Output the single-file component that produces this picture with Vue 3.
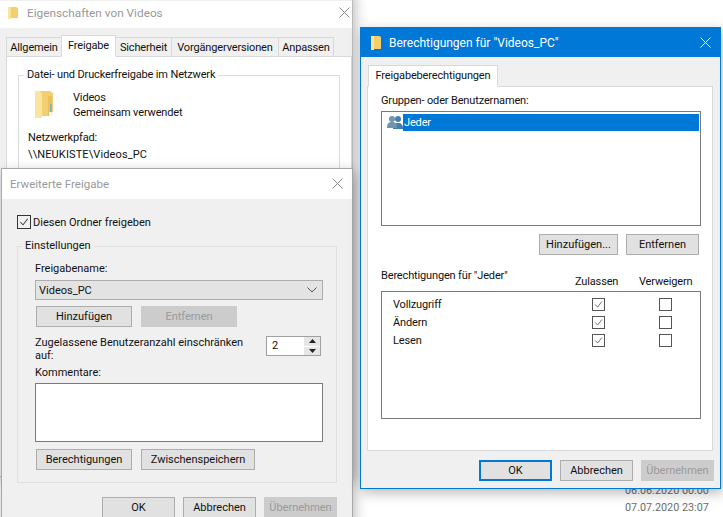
<script setup>
const perms = ['Vollzugriff', 'Ändern', 'Lesen']
const tabs = [
  { label: 'Allgemein', w: 56 },
  { label: 'Freigabe', w: 55, on: true },
  { label: 'Sicherheit', w: 57 },
  { label: 'Vorgängerversionen', w: 108 },
  { label: 'Anpassen', w: 56 }
]
</script>

<template>
  <div class="desk">
    <div class="stamp cut">06.06.2020 00:00</div>
    <div class="stamp">07.07.2020 23:07</div>

    <section class="win one">
      <header class="bar">
        <svg class="tiny" viewBox="0 0 10 12"><path d="M0 0h8l2 1v10H3l-3 1z" fill="#f4cf6c"/><path d="M0 0h3v12H0z" fill="#fbe59b"/></svg>
        <span class="title">Eigenschaften von Videos</span>
        <svg class="x" viewBox="0 0 11 11"><path d="M.5.5l10 10M10.5.5l-10 10" stroke="#8a8a8a" fill="none"/></svg>
      </header>
      <div class="body1">
        <div class="tabs1">
          <span v-for="t in tabs" :key="t.label" class="tab" :class="{ on: t.on }" :style="{ width: t.w + 'px' }">{{ t.label }}</span>
        </div>
        <div class="panel1">
          <fieldset class="grp1">
            <legend>Datei- und Druckerfreigabe im Netzwerk</legend>
            <div class="share">
              <svg class="folder" viewBox="0 0 22 28">
                <path d="M1 1h15l3 2v23H5l-4 2z" fill="#f2cf73"/>
                <path d="M1 1h5l2 3v24H1z" fill="#fae4a0"/>
                <path d="M14 6h4v20h-4z" fill="#e9c15a"/>
                <path d="M16 14h2v8h-2z" fill="#8fb3c4"/>
                <path d="M15 22h4v4h-4z" fill="#f4f4f0"/>
              </svg>
              <div class="sharetext"><div>Videos</div><div>Gemeinsam verwendet</div></div>
            </div>
            <div class="pathlabel">Netzwerkpfad:</div>
            <div class="pathvalue">\\NEUKISTE\Videos_PC</div>
          </fieldset>
        </div>
      </div>
    </section>

    <section class="win two">
      <header class="bar bar2">
        <span class="title t2">Erweiterte Freigabe</span>
        <svg class="x" viewBox="0 0 11 11"><path d="M.5.5l10 10M10.5.5l-10 10" stroke="#8a8a8a" fill="none"/></svg>
      </header>
      <div class="body2">
        <label class="share-check">
          <span class="check big"><svg viewBox="0 0 13 13"><path d="M2.5 6.5l3 3 5-6.5" stroke="#444" stroke-width="1.1" fill="none"/></svg></span>
          <span>Diesen Ordner freigeben</span>
        </label>
        <fieldset class="grp2">
          <legend>Einstellungen</legend>
          <div class="lab">Freigabename:</div>
          <div class="select">
            <span>Videos_PC</span>
            <svg viewBox="0 0 10 6"><path d="M.5.5L5 5 9.5.5" stroke="#555" fill="none"/></svg>
          </div>
          <div class="row r1">
            <button class="btn w96">Hinzufügen</button>
            <button class="btn w96 off">Entfernen</button>
          </div>
          <div class="limit">
            <div class="limittext">Zugelassene Benutzeranzahl einschränken auf:</div>
            <div class="spin">
              <span class="val">2</span>
              <span class="arrows">
                <i><svg viewBox="0 0 7 4"><path d="M3.5 0L7 4H0z" fill="#222"/></svg></i>
                <i><svg viewBox="0 0 7 4"><path d="M3.5 4L7 0H0z" fill="#222"/></svg></i>
              </span>
            </div>
          </div>
          <div class="lab lab2">Kommentare:</div>
          <div class="area"></div>
          <div class="row r2">
            <button class="btn w96">Berechtigungen</button>
            <button class="btn w114">Zwischenspeichern</button>
          </div>
        </fieldset>
        <div class="foot foot2">
          <button class="btn w73">OK</button>
          <button class="btn w73">Abbrechen</button>
          <button class="btn w73 off">Übernehmen</button>
        </div>
      </div>
    </section>

    <section class="win three">
      <header class="bar blue">
        <svg class="tiny t3" viewBox="0 0 10 14"><path d="M0 0h8l2 1v12H3l-3 1z" fill="#f4cf6c"/><path d="M0 0h3v14H0z" fill="#fbe59b"/></svg>
        <span class="title w">Berechtigungen für "Videos_PC"</span>
        <svg class="x xw" viewBox="0 0 11 11"><path d="M.5.5l10 10M10.5.5l-10 10" stroke="#fff" fill="none"/></svg>
      </header>
      <div class="body3">
        <div class="tabs3"><span class="tab on only">Freigabeberechtigungen</span></div>
        <div class="panel3">
          <div class="lab3">Gruppen- oder Benutzernamen:</div>
          <div class="list">
            <div class="item">
              <svg class="users" viewBox="0 0 16 14">
                <circle cx="11" cy="4" r="3" fill="#3f7fb5"/><path d="M6 14c0-5 2-6 5-6s5 1 5 6z" fill="#3f7fb5"/>
                <circle cx="5" cy="4" r="3" fill="#6f94ad"/><path d="M0 13c0-5 2-6 5-6s5 1 5 6z" fill="#6f94ad"/>
              </svg>
              <span class="sel">Jeder</span>
            </div>
          </div>
          <div class="row r3">
            <button class="btn w79">Hinzufügen...</button>
            <button class="btn w73">Entfernen</button>
          </div>
          <div class="permhead">
            <span class="ph1">Berechtigungen für "Jeder"</span>
            <span class="ph2">Zulassen</span>
            <span class="ph3">Verweigern</span>
          </div>
          <div class="permbox">
            <div v-for="p in perms" :key="p" class="perm">
              <span class="pn">{{ p }}</span>
              <span class="cell"><span class="check"><svg viewBox="0 0 13 13"><path d="M2.5 6.5l3 3 5-6.5" stroke="#555" fill="none"/></svg></span></span>
              <span class="cell"><span class="check"></span></span>
            </div>
          </div>
        </div>
        <div class="foot foot3">
          <button class="btn w73 def">OK</button>
          <button class="btn w73">Abbrechen</button>
          <button class="btn w73 off">Übernehmen</button>
        </div>
      </div>
    </section>
  </div>
</template>

<style>
html, body { margin: 0; background: #fff; }
</style>

<style scoped>
.desk { position: relative; width: 723px; height: 517px; overflow: hidden; background: #fff; font: 11px Roboto, sans-serif; color: #111; }
.stamp { position: absolute; left: 625px; top: 501px; color: #6d6d6d; font-size: 10.8px; }
.cut { top: 484px; }
.win { position: absolute; box-sizing: border-box; background: #f0f0f0; box-shadow: 2px 4px 12px rgba(0,0,0,.28); }
.one { left: -1px; top: -10px; width: 354px; height: 487px; border: 1px solid #bbb; letter-spacing: -.15px; }
.two { left: 1px; top: 168px; width: 352px; height: 360px; border: 1px solid #a8a8a8; }
.three { left: 360px; top: 27px; width: 361px; height: 462px; border: 1px solid #0078d7; letter-spacing: -.15px; }
.bar { box-sizing: border-box; height: 27px; background: #fff; display: flex; align-items: center; margin-top: 10px; padding: 0 0 4px 8px; }
.bar2 { height: 30px; margin-top: 0; padding: 0 0 1px 8px; }
.blue { background: #0078d7; height: 29px; margin-top: 0; padding: 0 0 0 10px; }
.tiny { width: 10px; height: 12px; margin-right: 9px; }
.t3 { height: 14px; margin-right: 8px; }
.title { font-size: 11.8px; letter-spacing: 0; color: #999; flex: 1; }
.t2 { font-size: 11.5px; }
.title.w { font-size: 12px; color: #fff; }
.x { width: 11px; height: 11px; margin-right: 3px; }
.one .x { margin-right: 2px; }
.two .x { margin-right: 9px; }
.three .x { margin-right: 9px; }
.body1 { padding: 7px 0 0 6px; }
.tabs1 { display: flex; align-items: flex-end; height: 21px; padding-left: 1px; position: relative; z-index: 1; }
.tab { box-sizing: border-box; height: 19px; border: 1px solid #d9d9d9; border-bottom: 0; margin-left: -1px; text-align: center; line-height: 19px; background: #f0f0f0; white-space: nowrap; }
.tab.on { height: 22px; background: #fff; position: relative; line-height: 20px; border-bottom: 1px solid #fff; margin-bottom: -1px; }
.panel1 { box-sizing: border-box; width: 346px; height: 420px; background: #fff; border: 1px solid #d9d9d9; padding: 11px 11px 0; }
fieldset { margin: 0; border: 1px solid #dcdcdc; min-width: 0; }
legend { padding: 0 3px; margin: 0; line-height: 14px; }
.grp1 { box-sizing: border-box; height: 300px; padding: 0 10px; }
.grp1 legend { margin-left: -5px; }
.share { display: flex; margin-top: 8px; padding-left: 5px; }
.folder { width: 22px; height: 28px; margin-right: 17px; }
.sharetext { line-height: 15px; }
.pathlabel { line-height: 16px; margin: 10px 0 0 -1px; }
.pathvalue { line-height: 16px; margin: 1px 0 0 -1px; letter-spacing: .12px; }
.body2 { padding: 0 0 0 15px; }
.share-check { display: flex; align-items: center; height: 14px; margin-top: 16px; gap: 2px; }
.check { display: inline-block; box-sizing: border-box; width: 13px; height: 13px; border: 1px solid #333; background: #fff; }
.check svg { display: block; width: 11px; height: 11px; }
.check.big { background: transparent; width: 14px; height: 14px; }
.check.big svg { width: 12px; height: 12px; }
.grp2 { box-sizing: border-box; width: 320px; height: 244px; margin-top: 10px; padding: 0 14px 0 17px; border-color: #e0e0e0; }
.grp2 legend { margin-left: -13px; }
.lab { line-height: 14px; margin-top: 9px; }
.select { box-sizing: border-box; width: 288px; height: 20px; margin-top: 4px; background: #e3e3e3; border: 1px solid #adadad; display: flex; align-items: center; justify-content: space-between; padding: 0 5px 0 3px; }
.select svg { width: 10px; height: 6px; }
.row { display: flex; gap: 9px; }
.r1 { margin: 6px 0 0 1px; }
.btn { box-sizing: border-box; height: 21px; padding: 0; background: #e1e1e1; border: 1px solid #adadad; font: inherit; color: #111; white-space: nowrap; display: flex; align-items: center; justify-content: center; }
.off { background: #ccc; border-color: #ccc; color: #9a9a9a; }
.w96 { width: 96px; } .w114 { width: 114px; } .w73 { width: 73px; } .w79 { width: 79px; }
.limit { display: flex; margin-top: 9px; height: 26px; }
.limittext { width: 215px; margin-right: 16px; line-height: 13px; }
.spin { box-sizing: border-box; width: 55px; height: 20px; border: 1px solid #a0a0a0; background: #fff; display: flex; justify-content: space-between; }
.val { padding-left: 5px; line-height: 18px; }
.arrows { width: 16px; display: flex; flex-direction: column; gap: 1px; }
.arrows i { flex: 1; background: #e6e6e6; display: flex; align-items: center; justify-content: center; }
.arrows svg { width: 7px; height: 4px; }
.lab2 { margin-top: 4px; }
.area { box-sizing: border-box; width: 288px; height: 59px; margin-top: 3px; background: #fff; border: 1px solid #7a7a7a; }
.r2 { margin: 7px 0 0 1px; }
.foot { display: flex; gap: 8px; }
.foot2 { padding-left: 85px; margin-top: 14px; }
.body3 { padding: 8px 0 0 6px; }
.tabs3 { height: 21px; position: relative; z-index: 1; padding-left: 1px; }
.only { display: inline-block; width: 130px; height: 22px; margin-left: 0; }
.panel3 { box-sizing: border-box; width: 346px; height: 365px; background: #fff; border: 1px solid #d9d9d9; padding: 7px 12px 0 13px; }
.lab3 { line-height: 14px; }
.list { box-sizing: border-box; width: 320px; height: 115px; margin-top: 3px; background: #fff; border: 1px solid #7a7a7a; padding: 1px 0 0 5px; }
.item { display: flex; align-items: center; height: 18px; }
.users { width: 16px; height: 14px; }
.sel { flex: 1; background: #0078d7; color: #fff; height: 17px; line-height: 17px; padding-left: 1px; margin-right: 1px; }
.r3 { justify-content: flex-end; gap: 8px; margin: 8px 1px 0 0; }
.permhead { display: flex; position: relative; height: 22px; margin-top: 14px; }
.ph1 { line-height: 14px; }
.ph2 { position: absolute; left: 194px; top: 6px; line-height: 14px; }
.ph3 { position: absolute; left: 258px; top: 6px; line-height: 14px; }
.permbox { box-sizing: border-box; width: 320px; height: 128px; background: #fff; border: 1px solid #7a7a7a; padding-top: 3px; }
.perm { display: flex; align-items: center; height: 18px; padding-left: 11px; }
.pn { flex: 0 0 199px; }
.cell { flex: 0 0 67px; display: flex; }
.perm .check { border-color: #555; }
.foot3 { padding-left: 112px; margin-top: 9px; }
.def { border: 2px solid #0078d7; }
</style>
